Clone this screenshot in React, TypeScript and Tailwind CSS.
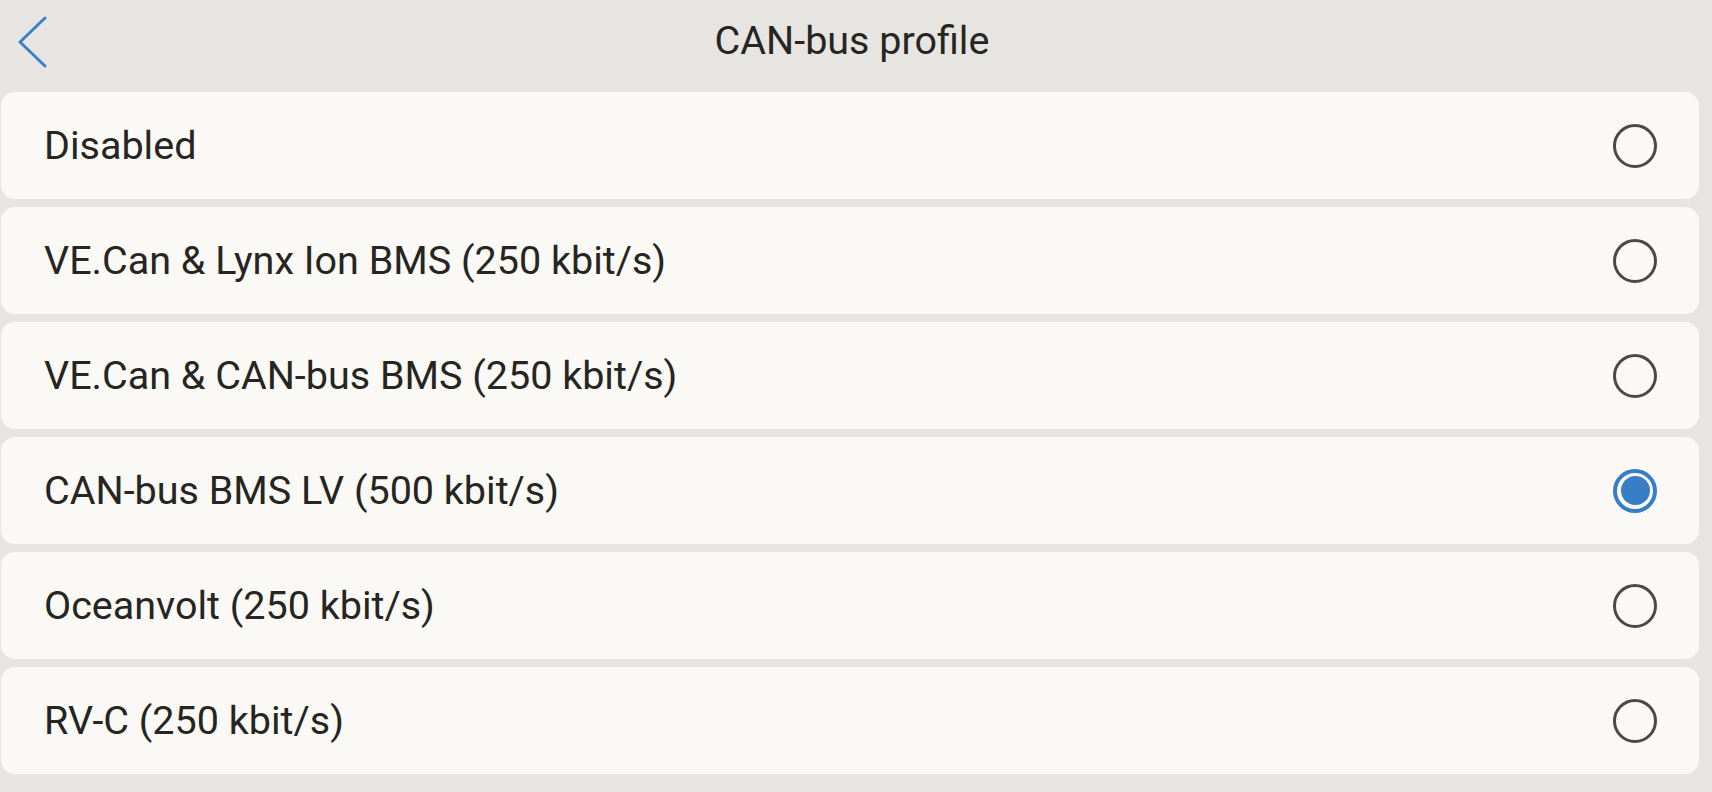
import React from "react";

const items = [
  "Disabled",
  "VE.Can & Lynx Ion BMS (250 kbit/s)",
  "VE.Can & CAN-bus BMS (250 kbit/s)",
  "CAN-bus BMS LV (500 kbit/s)",
  "Oceanvolt (250 kbit/s)",
  "RV-C (250 kbit/s)",
];

function Radio({ checked }: { checked: boolean }) {
  if (checked) {
    return (
      <div className="w-[44px] h-[44px] rounded-full border-[4px] border-[#387ec7] flex items-center justify-center">
        <div className="w-[29px] h-[29px] rounded-full bg-[#387ec7]" />
      </div>
    );
  }
  return <div className="w-[44px] h-[44px] rounded-full border-[3px] border-[#4a4946]" />;
}

export default function App() {
  return (
    <div
      className="w-[1712px] h-[792px] bg-[#e6e5e1] flex flex-col text-[#262521]"
      style={{ fontFamily: "Roboto, 'Noto Sans', sans-serif" }}
    >
      <div className="relative h-[92px] flex items-center justify-center shrink-0 pr-[8px]">
        <svg
          className="absolute left-[16px] top-[15px]"
          width="34"
          height="54"
          viewBox="0 0 34 54"
          fill="none"
        >
          <path d="M29 3 L4 27 L29 51" stroke="#3a80c8" strokeWidth="3" strokeLinecap="round" strokeLinejoin="round" />
        </svg>
        <div className="text-[39.5px] leading-none pb-[10px]">CAN-bus profile</div>
      </div>
      <div className="flex flex-col gap-[8px] pl-[1px] pr-[13px]">
        {items.map((t, i) => (
          <div
            key={t}
            className="h-[107px] bg-[#faf9f6] rounded-[14px] flex items-center justify-between pl-[43px] pr-[42px]"
          >
            <span className="text-[39.5px] leading-none">{t}</span>
            <Radio checked={i === 3} />
          </div>
        ))}
      </div>
    </div>
  );
}
